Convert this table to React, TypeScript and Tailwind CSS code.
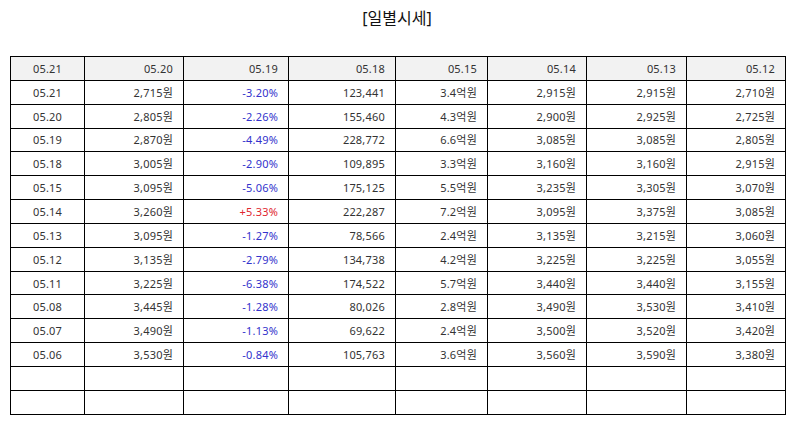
import React from 'react';

type Row = {
  date: string;
  close: string;
  rate: string;
  volume: string;
  amount: string;
  open: string;
  high: string;
  low: string;
};

const rows: Row[] = [
  { date: '05.21', close: '2,715원', rate: '-3.20%', volume: '123,441', amount: '3.4억원', open: '2,915원', high: '2,915원', low: '2,710원' },
  { date: '05.20', close: '2,805원', rate: '-2.26%', volume: '155,460', amount: '4.3억원', open: '2,900원', high: '2,925원', low: '2,725원' },
  { date: '05.19', close: '2,870원', rate: '-4.49%', volume: '228,772', amount: '6.6억원', open: '3,085원', high: '3,085원', low: '2,805원' },
  { date: '05.18', close: '3,005원', rate: '-2.90%', volume: '109,895', amount: '3.3억원', open: '3,160원', high: '3,160원', low: '2,915원' },
  { date: '05.15', close: '3,095원', rate: '-5.06%', volume: '175,125', amount: '5.5억원', open: '3,235원', high: '3,305원', low: '3,070원' },
  { date: '05.14', close: '3,260원', rate: '+5.33%', volume: '222,287', amount: '7.2억원', open: '3,095원', high: '3,375원', low: '3,085원' },
  { date: '05.13', close: '3,095원', rate: '-1.27%', volume: '78,566', amount: '2.4억원', open: '3,135원', high: '3,215원', low: '3,060원' },
  { date: '05.12', close: '3,135원', rate: '-2.79%', volume: '134,738', amount: '4.2억원', open: '3,225원', high: '3,225원', low: '3,055원' },
  { date: '05.11', close: '3,225원', rate: '-6.38%', volume: '174,522', amount: '5.7억원', open: '3,440원', high: '3,440원', low: '3,155원' },
  { date: '05.08', close: '3,445원', rate: '-1.28%', volume: '80,026', amount: '2.8억원', open: '3,490원', high: '3,530원', low: '3,410원' },
  { date: '05.07', close: '3,490원', rate: '-1.13%', volume: '69,622', amount: '2.4억원', open: '3,500원', high: '3,520원', low: '3,420원' },
  { date: '05.06', close: '3,530원', rate: '-0.84%', volume: '105,763', amount: '3.6억원', open: '3,560원', high: '3,590원', low: '3,380원' },
];

const headers = ['05.21', '05.20', '05.19', '05.18', '05.15', '05.14', '05.13', '05.12'];
const widths = ['w-[74px]', 'w-[99px]', 'w-[105px]', 'w-[107px]', 'w-[92px]', 'w-[99px]', 'w-[100px]', 'w-[99px]'];

const cell = 'border border-black h-[23.85px] p-0 pr-[10px] text-right';
const first = 'border border-black h-[23.85px] p-0 text-center';

export default function App() {
  return (
    <div className="w-[794px] h-[425px] bg-white text-[#333] font-['Noto_Sans','Noto_Sans_CJK_KR',sans-serif]">
      <h1 className="pt-[7px] h-[57px] text-center text-[16px] leading-[22px] font-normal text-[#111]">[일별시세]</h1>
      <table className="-mt-px ml-[10px] w-[776px] table-fixed border-collapse text-[11px] leading-none tracking-[0.2px]">
        <colgroup>
          {widths.map((w, i) => (
            <col key={i} className={w} />
          ))}
        </colgroup>
        <thead>
          <tr className="bg-[#f2f2f2]">
            {headers.map((h, i) => (
              <th key={h} className={`${i === 0 ? first : cell} font-normal`}>
                {h}
              </th>
            ))}
          </tr>
        </thead>
        <tbody>
          {rows.map((r) => (
            <tr key={r.date}>
              <td className={first}>{r.date}</td>
              <td className={cell}>{r.close}</td>
              <td className={`${cell} ${r.rate.startsWith('+') ? 'text-[#e0262f]' : 'text-[#3333cc]'}`}>{r.rate}</td>
              <td className={cell}>{r.volume}</td>
              <td className={cell}>{r.amount}</td>
              <td className={cell}>{r.open}</td>
              <td className={cell}>{r.high}</td>
              <td className={cell}>{r.low}</td>
            </tr>
          ))}
          {[0, 1].map((k) => (
            <tr key={`empty-${k}`}>
              {headers.map((h, i) => (
                <td key={h} className={i === 0 ? first : cell}></td>
              ))}
            </tr>
          ))}
        </tbody>
      </table>
    </div>
  );
}
